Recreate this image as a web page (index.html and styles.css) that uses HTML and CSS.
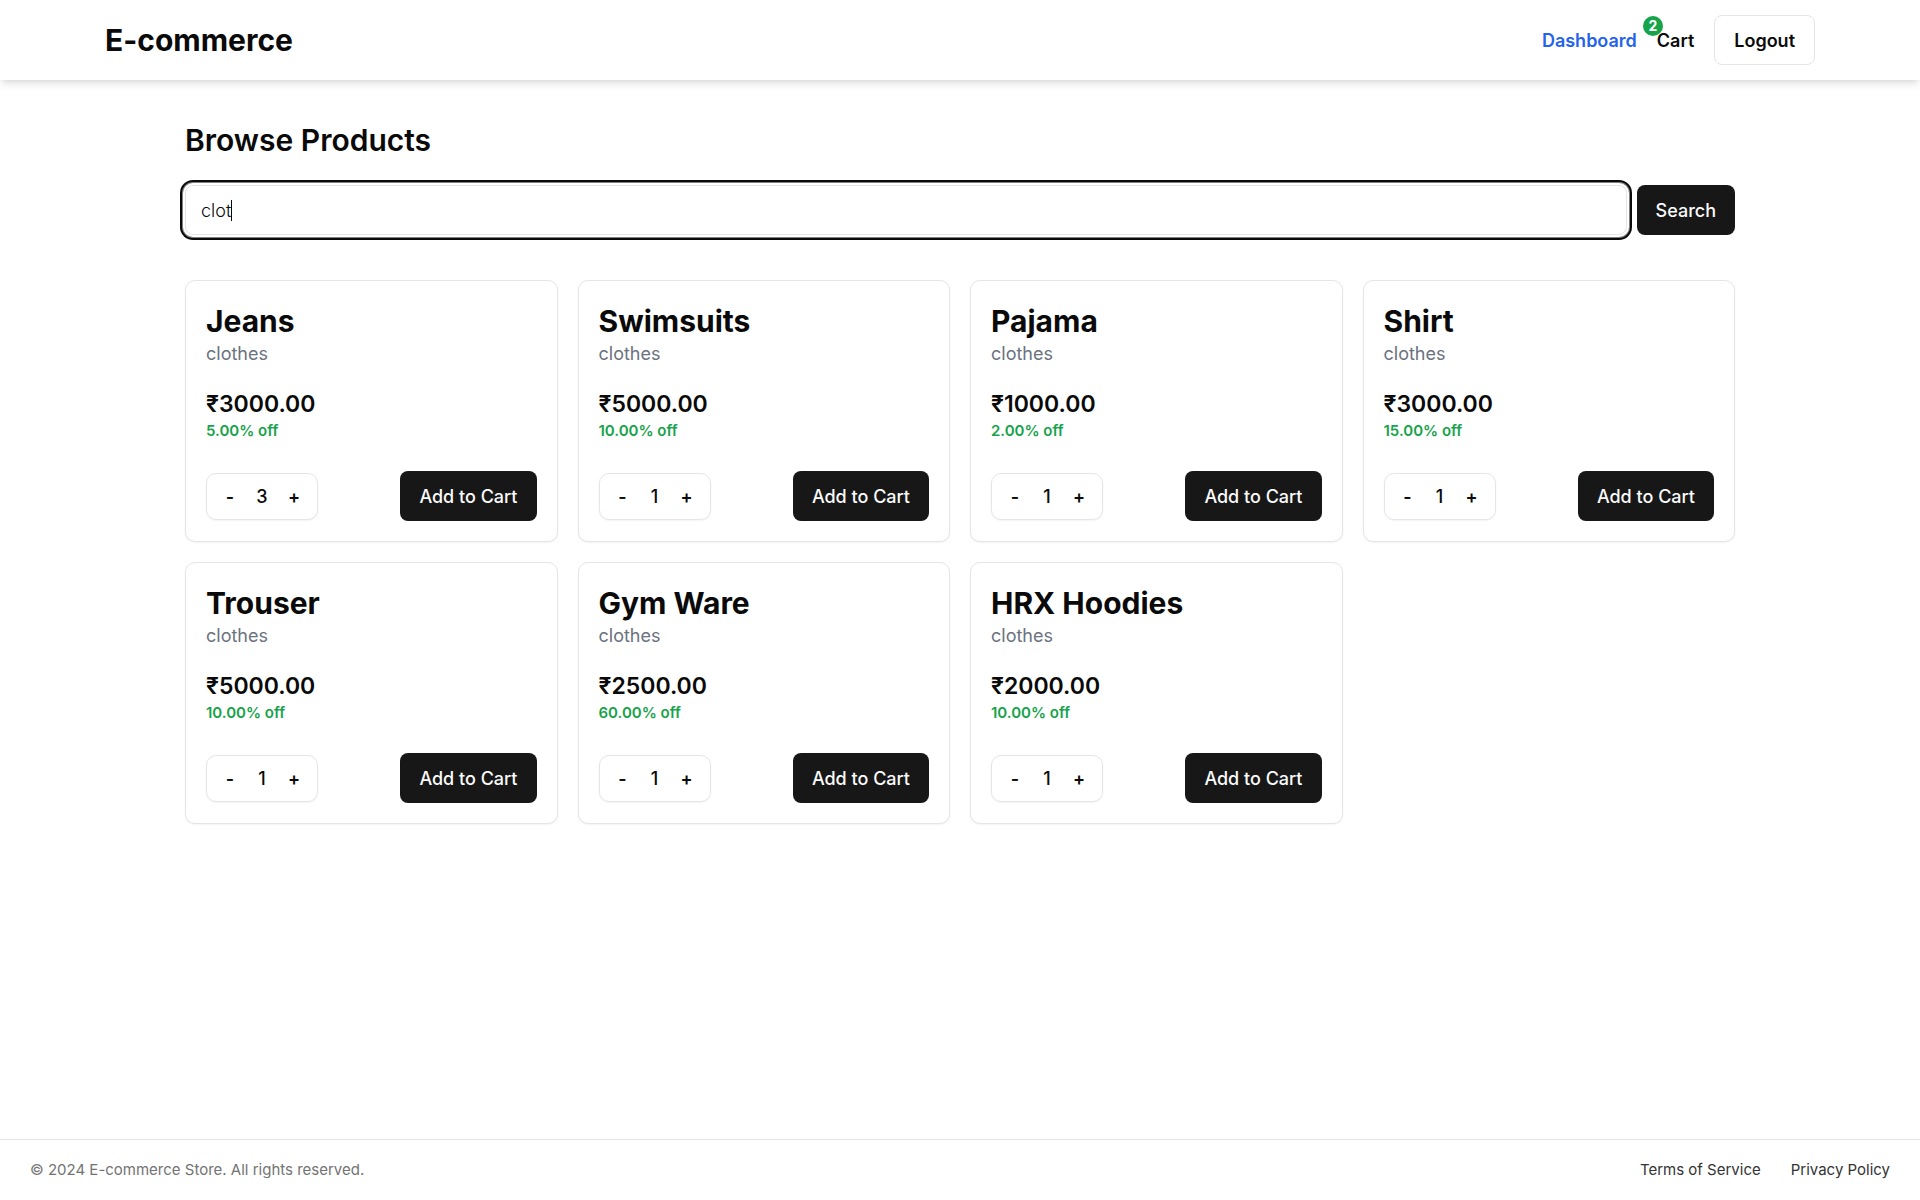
FILE: index.html
```html
<!DOCTYPE html>
<html lang="en">
<head>
<meta charset="utf-8">
<meta name="viewport" content="width=device-width, initial-scale=1">
<title>E-commerce</title>
<link rel="stylesheet" href="styles.css">
</head>
<body>
<header class="site-header">
  <div class="header-inner">
    <h1 class="brand">E-commerce</h1>
    <nav class="nav">
      <a class="nav-link active" href="#">Dashboard</a>
      <a class="nav-link cart-link" href="#">Cart<span class="badge">2</span></a>
      <button class="button outline" type="button">Logout</button>
    </nav>
  </div>
</header>
<main class="content">
  <h2 class="page-title">Browse Products</h2>
  <form class="search">
    <input class="search-input" type="text" value="clot" aria-label="Search products">
    <button class="button primary" type="submit">Search</button>
  </form>
  <section class="products">
    <article class="card">
      <h3 class="name">Jeans</h3>
      <p class="category">clothes</p>
      <p class="price">₹3000.00</p>
      <p class="discount">5.00% off</p>
      <div class="actions">
        <div class="stepper"><button class="step" type="button">-</button><span class="count">3</span><button class="step" type="button">+</button></div>
        <button class="button primary" type="button">Add to Cart</button>
      </div>
    </article>
    <article class="card">
      <h3 class="name">Swimsuits</h3>
      <p class="category">clothes</p>
      <p class="price">₹5000.00</p>
      <p class="discount">10.00% off</p>
      <div class="actions">
        <div class="stepper"><button class="step" type="button">-</button><span class="count">1</span><button class="step" type="button">+</button></div>
        <button class="button primary" type="button">Add to Cart</button>
      </div>
    </article>
    <article class="card">
      <h3 class="name">Pajama</h3>
      <p class="category">clothes</p>
      <p class="price">₹1000.00</p>
      <p class="discount">2.00% off</p>
      <div class="actions">
        <div class="stepper"><button class="step" type="button">-</button><span class="count">1</span><button class="step" type="button">+</button></div>
        <button class="button primary" type="button">Add to Cart</button>
      </div>
    </article>
    <article class="card">
      <h3 class="name">Shirt</h3>
      <p class="category">clothes</p>
      <p class="price">₹3000.00</p>
      <p class="discount">15.00% off</p>
      <div class="actions">
        <div class="stepper"><button class="step" type="button">-</button><span class="count">1</span><button class="step" type="button">+</button></div>
        <button class="button primary" type="button">Add to Cart</button>
      </div>
    </article>
    <article class="card">
      <h3 class="name">Trouser</h3>
      <p class="category">clothes</p>
      <p class="price">₹5000.00</p>
      <p class="discount">10.00% off</p>
      <div class="actions">
        <div class="stepper"><button class="step" type="button">-</button><span class="count">1</span><button class="step" type="button">+</button></div>
        <button class="button primary" type="button">Add to Cart</button>
      </div>
    </article>
    <article class="card">
      <h3 class="name">Gym Ware</h3>
      <p class="category">clothes</p>
      <p class="price">₹2500.00</p>
      <p class="discount">60.00% off</p>
      <div class="actions">
        <div class="stepper"><button class="step" type="button">-</button><span class="count">1</span><button class="step" type="button">+</button></div>
        <button class="button primary" type="button">Add to Cart</button>
      </div>
    </article>
    <article class="card">
      <h3 class="name">HRX Hoodies</h3>
      <p class="category">clothes</p>
      <p class="price">₹2000.00</p>
      <p class="discount">10.00% off</p>
      <div class="actions">
        <div class="stepper"><button class="step" type="button">-</button><span class="count">1</span><button class="step" type="button">+</button></div>
        <button class="button primary" type="button">Add to Cart</button>
      </div>
    </article>
  </section>
</main>
<footer class="site-footer">
  <p class="copyright">© 2024 E-commerce Store. All rights reserved.</p>
  <nav class="footer-links">
    <a class="footer-link" href="#">Terms of Service</a>
    <a class="footer-link" href="#">Privacy Policy</a>
  </nav>
</footer>
</body>
</html>
```
FILE: styles.css
```css
* {
  box-sizing: border-box;
  margin: 0;
}

body {
  display: flex;
  flex-direction: column;
  min-height: 100vh;
  background: #fff;
  color: #0a0a0a;
  font: 400 18px/26px Inter, "Noto Sans", sans-serif;
}

a {
  color: inherit;
  text-decoration: none;
}

.site-header {
  background: #fff;
  box-shadow: 0 5px 8px -1px rgba(0, 0, 0, 0.1), 0 3px 5px -3px rgba(0, 0, 0, 0.1);
}

.header-inner {
  display: flex;
  align-items: center;
  justify-content: space-between;
  max-width: 1750px;
  margin: 0 auto;
  padding: 15px 20px;
}

.brand {
  font-size: 30px;
  line-height: 40px;
  font-weight: 700;
}

.nav {
  display: flex;
  align-items: center;
  gap: 20px;
}

.nav-link {
  padding-top: 2px;
  font-weight: 600;
}

.active {
  color: #2563eb;
}

.cart-link {
  position: relative;
}

.badge {
  position: absolute;
  top: -10px;
  left: -14px;
  width: 20px;
  height: 20px;
  border-radius: 50%;
  background: #16a34a;
  color: #fff;
  font-size: 14px;
  line-height: 20px;
  font-weight: 700;
  text-align: center;
}

.button {
  height: 50px;
  padding: 2px 19px 0;
  border: 0;
  border-radius: 8px;
  font: 500 18px/26px Inter, "Noto Sans", sans-serif;
  white-space: nowrap;
}

.outline {
  border: 1px solid #e5e5e5;
  background: #fff;
  color: #0a0a0a;
  font-weight: 600;
}

.primary {
  background: #171717;
  color: #fafafa;
}

.content {
  flex: 1;
  width: 100%;
  max-width: 1750px;
  margin: 0 auto;
  padding: 40px 100px;
}

.page-title {
  margin-bottom: 25px;
  font-size: 30px;
  line-height: 40px;
  font-weight: 600;
}

.search {
  display: flex;
  gap: 10px;
  margin-bottom: 45px;
}

/* Shown focused: ring around the field and a text caret after the query */
.search-input {
  flex: 1;
  min-width: 0;
  height: 50px;
  padding: 0 15px;
  border: 1px solid #e5e5e5;
  border-radius: 8px;
  outline: 0;
  background: linear-gradient(#0a0a0a, #0a0a0a) 45px 50% / 1px 21px no-repeat #fff;
  box-shadow: 0 0 0 2px #fff, 0 0 0 3px #808080, 0 0 0 5px #0a0a0a;
  color: #0a0a0a;
  font: 300 18px/26px Inter, "Noto Sans", sans-serif;
}

.products {
  display: grid;
  grid-template-columns: repeat(4, minmax(0, 1fr));
  gap: 20px;
}

.card {
  padding: 20px;
  border: 1px solid #e5e5e5;
  border-radius: 10px;
  background: #fff;
  box-shadow: 0 1px 2px rgba(0, 0, 0, 0.05);
}

.name {
  font-size: 30px;
  line-height: 40px;
  font-weight: 700;
}

.category {
  margin-bottom: 21px;
  color: #6b7280;
}

.price {
  font-size: 23px;
  line-height: 32px;
  font-weight: 600;
}

.discount {
  margin-bottom: 29px;
  color: #16a34a;
  font-size: 15px;
  line-height: 22px;
  font-weight: 600;
}

.actions {
  display: flex;
  align-items: center;
  justify-content: space-between;
}

.stepper {
  display: flex;
  align-items: center;
  width: 112px;
  height: 47px;
  padding: 2px 7px 0;
  border: 1px solid #e5e5e5;
  border-radius: 10px;
  box-shadow: 0 1px 2px rgba(0, 0, 0, 0.05);
}

.step,
.count {
  flex: 1;
  padding: 0;
  border: 0;
  background: none;
  color: #0a0a0a;
  font: 600 18px/26px Inter, "Noto Sans", sans-serif;
  text-align: center;
}

.count {
  font-weight: 500;
}

.site-footer {
  display: flex;
  align-items: center;
  justify-content: space-between;
  padding: 20px 30px;
  border-top: 1px solid #e5e5e5;
  font-size: 15px;
  line-height: 20px;
}

.copyright {
  color: #737373;
}

.footer-links {
  display: flex;
  gap: 30px;
}

.footer-link {
  color: #333;
}
```
